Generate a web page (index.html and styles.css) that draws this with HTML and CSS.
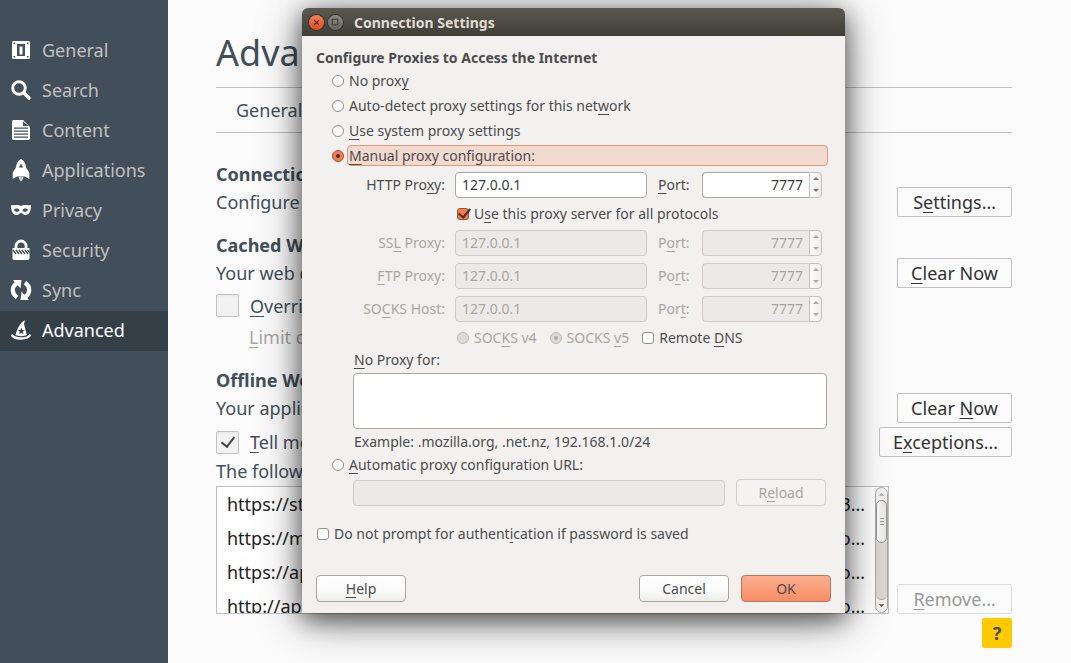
FILE: index.html
```html
<!DOCTYPE html>
<html lang="en">
<head>
<meta charset="utf-8">
<title>Connection Settings</title>
<link rel="stylesheet" href="styles.css">
</head>
<body>
<div class="page">
  <nav class="sidebar">
    <a class="category" href="#general"><svg class="icon" viewBox="0 0 20 20"><rect x="1" y="1" width="18" height="18" rx="1.500" fill="#fff"/><path fill="#424f5a" d="M6 4h8v12h-2.500V6.500h-3V16H6z"/><path fill="#424f5a" d="M8 14.500h4V16H8zM2.500 2.500H4V4H2.500zM16 2.500h1.500V4H16zM2.500 16H4v1.500H2.500zM16 16h1.500v1.500H16z"/></svg>General</a>
    <a class="category" href="#search"><svg class="icon" viewBox="0 0 20 20"><circle cx="8" cy="8" r="6.300" fill="none" stroke="#fff" stroke-width="3"/><path stroke="#fff" stroke-width="3.600" stroke-linecap="round" d="M13 13l5 5"/></svg>Search</a>
    <a class="category" href="#content"><svg class="icon" viewBox="0 0 20 20"><path fill="#fff" fill-rule="evenodd" d="M2 0h10l7 7v12l-1 1H2l-1-1V1zM12 1.500V6h5.500zM3 7.500v1.200h14V7.500zM3 10.500v1.200h14v-1.200zM3 13.500v1.200h14v-1.200zM3 16.500v1.200h14v-1.200z"/></svg>Content</a>
    <a class="category" href="#applications"><svg class="icon" viewBox="0 0 20 20"><path fill="#fff" fill-rule="evenodd" d="M10-1c3 1.500 4.800 4.500 5 8.500l3.300 5V19l-4.300-2.500H6L1.700 19v-6.500l3.300-5C5.200 3.500 7 .5 10-1zm0 4.500L8 7.500h4z"/><path fill="#ccc" d="M7.500 17h5L11.500 20 10 21.500 8.500 20z"/></svg>Applications</a>
    <a class="category" href="#privacy"><svg class="icon" viewBox="0 0 20 20"><path fill="#fff" fill-rule="evenodd" d="M0 5c3 1 6-1 10 1 4-2 7 0 10-1 0 6-1.500 10-5.500 10-2.500 0-3-2-4.500-2s-2 2-4.500 2C1.500 15 0 11 0 5zm3 5c1.500 2.500 4.500 2 5.500.500C7.500 8 4.500 8 3 10zm8.500.500c1 1.500 4 2 5.500-.500-1.500-2-4.500-2-5.500.500z"/></svg>Privacy</a>
    <a class="category" href="#security"><svg class="icon" viewBox="0 0 20 20"><path fill="none" stroke="#fff" stroke-width="2.800" d="M5 9V6a5 5 0 0 1 10 0v3"/><path fill="#fff" d="M1.500 8h17v11l-1 1h-15l-1-1z"/><path stroke="#424f5a" stroke-width="1.400" d="M2 10l3 4M5 10l3 4M8 10l3 4M11 10l3 4M14 10l3 4M16.500 10l2 2.700"/></svg>Security</a>
    <a class="category" href="#sync"><svg class="icon" viewBox="0 0 20 20"><path fill="none" stroke="#fff" stroke-width="4.200" d="M6 17.500C.5 13.500.5 7 5.500 3.500M14 2.500c5.500 4 5.500 10.500.5 14"/><path fill="#fff" d="M2 0h8.500L9.500 8.500zM18 20H9.500l1-8.500z"/></svg>Sync</a>
    <a class="category selected" href="#advanced"><svg class="icon" viewBox="0 0 20 20"><path fill="#fff" d="M14 0l-1 4 2.800 11c-3 1.500-8 1.500-11.300 0C6 10 8 3.500 14 0z"/><path fill="none" stroke="#fff" stroke-width="2.400" stroke-linecap="round" d="M1.300 15.500c2.500 4 15 4 17.400 0"/><path fill="#343f48" d="M10.300 7.500l1 2.500h2.500l-2 1.600.800 2.600-2.300-1.500L8 14.200l.800-2.600-2-1.600h2.500z"/></svg>Advanced</a>
  </nav>

  <main class="content">
    <h1 class="title">Advanced</h1>
    <div class="tabs"><a class="tab" href="#general-tab">General</a></div>

    <h2 class="group">Connection</h2>
    <div class="row"><span>Configure</span><button class="button">S<u>e</u>ttings…</button></div>

    <h2 class="group spaced">Cached Web</h2>
    <div class="row"><span>Your web cache</span><button class="button"><u>C</u>lear Now</button></div>
    <label class="check-row"><input class="box" type="checkbox"><span><u>O</u>verride</span></label>
    <div class="limit"><span><u>L</u>imit cache</span></div>

    <h2 class="group spaced">Offline Web</h2>
    <div class="row"><span>Your application</span><button class="button">Clear <u>N</u>ow</button></div>
    <div class="row tell"><label class="check"><input class="box" type="checkbox" checked><span><u>T</u>ell me</span></label><button class="button wide">E<u>x</u>ceptions…</button></div>
    <div class="caption">The following</div>
    <div class="sites">
      <div class="list">
        <ul class="items">
          <li><span>https://st</span><span>3…</span></li>
          <li><span>https://m</span><span>o…</span></li>
          <li><span>https://ap</span><span>o…</span></li>
          <li><span>http://app</span><span>o…</span></li>
        </ul>
        <div class="scrollbar">
          <svg class="arrow" viewBox="0 0 12 12"><path fill="#aaa" d="M3 8l3-3 3 3z"/></svg>
          <div class="track"><div class="thumb"></div></div>
          <svg class="arrow" viewBox="0 0 12 12"><path fill="#555" d="M3 4l3 3 3-3z"/></svg>
        </div>
      </div>
      <button class="button" disabled><u>R</u>emove…</button>
    </div>
    <div class="help-row"><button class="help">?</button></div>
  </main>
</div>

<section class="dialog" role="dialog" aria-labelledby="dialog-title">
  <header class="titlebar">
    <button class="window-button close" aria-label="Close"><svg viewBox="0 0 16 16"><path stroke="#5a2410" stroke-width="1.300" d="M5.500 5.500l5 5M10.500 5.500l-5 5"/></svg></button>
    <button class="window-button" aria-label="Maximize"><svg viewBox="0 0 16 16"><path fill="none" stroke="#34332e" d="M4.500 4.500h6v6h-6z"/></svg></button>
    <span id="dialog-title">Connection Settings</span>
  </header>
  <form class="body">
    <h3 class="heading">Configure Proxies to Access the Internet</h3>
    <label class="choice"><input class="radio" type="radio" name="mode"><span>No prox<u>y</u></span></label>
    <label class="choice"><input class="radio" type="radio" name="mode"><span>Auto-detect proxy settings for this net<u>w</u>ork</span></label>
    <label class="choice"><input class="radio" type="radio" name="mode"><span><u>U</u>se system proxy settings</span></label>
    <label class="choice"><input class="radio" type="radio" name="mode" checked><span class="focused"><u>M</u>anual proxy configuration:</span></label>

    <div class="proxies">
      <label class="name" for="http">HTTP Pro<u>x</u>y:</label>
      <input class="field" id="http" value="127.0.0.1">
      <label for="http-port"><u>P</u>ort:</label>
      <div class="spin"><input class="field" id="http-port" value="7777"><div class="steps"><button type="button" class="step up" aria-label="Increase"></button><button type="button" class="step down" aria-label="Decrease"></button></div></div>

      <label class="share"><input class="tick" type="checkbox" checked><span>U<u>s</u>e this proxy server for all protocols</span></label>

      <label class="name off" for="ssl">SS<u>L</u> Proxy:</label>
      <input class="field" id="ssl" value="127.0.0.1" disabled>
      <label class="off" for="ssl-port">P<u>o</u>rt:</label>
      <div class="spin off"><input class="field" id="ssl-port" value="7777" disabled><div class="steps"><button type="button" class="step up" aria-label="Increase" disabled></button><button type="button" class="step down" aria-label="Decrease" disabled></button></div></div>

      <label class="name off" for="ftp"><u>F</u>TP Proxy:</label>
      <input class="field" id="ftp" value="127.0.0.1" disabled>
      <label class="off" for="ftp-port">Po<u>r</u>t:</label>
      <div class="spin off"><input class="field" id="ftp-port" value="7777" disabled><div class="steps"><button type="button" class="step up" aria-label="Increase" disabled></button><button type="button" class="step down" aria-label="Decrease" disabled></button></div></div>

      <label class="name off" for="socks">SO<u>C</u>KS Host:</label>
      <input class="field" id="socks" value="127.0.0.1" disabled>
      <label class="off" for="socks-port">Por<u>t</u>:</label>
      <div class="spin off"><input class="field" id="socks-port" value="7777" disabled><div class="steps"><button type="button" class="step up" aria-label="Increase" disabled></button><button type="button" class="step down" aria-label="Decrease" disabled></button></div></div>

      <div class="versions">
        <label class="option off"><input class="radio" type="radio" name="socks" disabled><span>SOC<u>K</u>S v4</span></label>
        <label class="option off"><input class="radio" type="radio" name="socks" checked disabled><span>SOCKS <u>v</u>5</span></label>
        <label class="option"><input class="tick" type="checkbox"><span>Remote <u>D</u>NS</span></label>
      </div>
    </div>

    <div class="exceptions">
      <label class="line" for="bypass"><span><u>N</u>o Proxy for:</span></label>
      <textarea class="field area" id="bypass"></textarea>
      <div class="example">Example: .mozilla.org, .net.nz, 192.168.1.0/24</div>
    </div>
    <label class="choice auto"><input class="radio" type="radio" name="mode"><span><u>A</u>utomatic proxy configuration URL:</span></label>
    <div class="url"><input class="field" aria-label="Automatic proxy configuration URL" disabled><button type="button" class="push" disabled>R<u>e</u>load</button></div>
    <label class="prompt"><input class="tick" type="checkbox"><span>Do not prompt for authent<u>i</u>cation if password is saved</span></label>
    <footer class="actions">
      <button type="button" class="push"><u>H</u>elp</button>
      <button type="button" class="push cancel">Cancel</button>
      <button type="button" class="push primary">OK</button>
    </footer>
  </form>
</section>
</body>
</html>
```
FILE: styles.css
```css
* { box-sizing: border-box; }
body {
  margin: 0;
  font: 18px/26px "Noto Sans", "Open Sans", sans-serif;
  color: #424f5a;
  background: #fbfbfb;
}
button, input, textarea { font: inherit; color: inherit; margin: 0; }
u { text-decoration-thickness: 1px; text-underline-offset: 3px; }
a { color: inherit; text-decoration: none; }
label, .row, .category, .push, .button { white-space: nowrap; }

.page { display: flex; min-height: 100vh; overflow: hidden; }
.sidebar { flex: 0 0 168px; padding-top: 31px; background: #424f5a; }
.category {
  display: flex;
  align-items: center;
  gap: 11px;
  height: 40px;
  padding: 0 0 2px 11px;
  color: #c1c1c1;
}
.selected { background: #343f48; color: #fff; }
.icon { width: 20px; height: 20px; overflow: visible; }

.content { flex: 1; padding: 0 59px 15px 48px; }
.title {
  margin: 0;
  height: 88px;
  padding-top: 30px;
  border-bottom: 1px solid #c1c1c1;
  font-size: 36px;
  line-height: 46px;
  font-weight: 400;
}
.tabs {
  display: flex;
  align-items: center;
  height: 45px;
  margin-bottom: 28px;
  padding-left: 20px;
  border-bottom: 1px solid #c1c1c1;
}
.group { margin: 0; font-size: 18px; line-height: 26px; font-weight: 700; }
.spaced { margin-top: 15px; }
.row { display: flex; align-items: center; justify-content: space-between; height: 30px; }
.button {
  width: 115px;
  height: 30px;
  padding: 0;
  border: 1px solid #c1c1c1;
  border-radius: 2px;
  background: #fbfbfb;
  color: #333;
  line-height: 28px;
}
.button:disabled { border-color: #dedede; color: #999; }
.wide { width: 133px; }
.check-row, .check { display: flex; align-items: center; gap: 11px; }
.check-row { height: 35px; }
.tell { margin-top: 4px; }
.box {
  appearance: none;
  display: grid;
  place-items: center;
  width: 23px;
  height: 23px;
  border: 1px solid #c1c1c1;
  border-radius: 2px;
  background: linear-gradient(#eaeaea, #f2f2f2 3px);
}
.box:checked::before {
  content: "";
  width: 6px;
  height: 11px;
  margin-bottom: 3px;
  border: solid #444;
  border-width: 0 2px 2px 0;
  transform: rotate(38deg);
}
.limit { height: 29px; padding-left: 33px; line-height: 28px; color: #aaa6a1; }
.caption { height: 29px; line-height: 28px; }
.sites { display: flex; align-items: flex-end; gap: 8px; }
.list {
  flex: 1;
  display: flex;
  height: 128px;
  border: 1px solid #c1c1c1;
  background: #fff;
  overflow: hidden;
}
.items { flex: 1; margin: 0; padding: 0 10px; list-style: none; color: #222; }
.items li { display: flex; justify-content: space-between; height: 34px; line-height: 35px; }
.scrollbar {
  display: flex;
  flex-direction: column;
  width: 13px;
  border: 1px solid #aaa7a3;
  border-radius: 7px;
  background: #f2f1f0;
}
.arrow { height: 12px; }
.track { flex: 1; border-radius: 6px; background: #d9d7d5; border-bottom: 1px solid #aaa7a3; }
.thumb {
  display: grid;
  height: 43px;
  border: 1px solid #999;
  border-radius: 6px;
  background: linear-gradient(90deg, #fafafa, #e6e5e4);
}
.thumb::before {
  content: "";
  width: 4px;
  height: 8px;
  margin: auto;
  background: repeating-linear-gradient(#999 0 1px, transparent 1px 3px);
}
.help-row { display: flex; justify-content: flex-end; margin-top: 4px; }
.help {
  width: 30px;
  height: 30px;
  padding: 0;
  border: 0;
  border-radius: 2px;
  background: #ffcb00;
  color: #4c4c4c;
  font-weight: 700;
}

.dialog {
  position: absolute;
  top: 8px;
  left: 302px;
  width: 543px;
  border-radius: 6px 6px 0 0;
  background: #f2f1f0;
  color: #4c4c4c;
  font-size: 14px;
  line-height: 20px;
  box-shadow: 0 8px 46px rgba(0, 0, 0, .4), 0 6px 24px rgba(0, 0, 0, .55);
}
.titlebar {
  display: flex;
  align-items: center;
  gap: 4px;
  height: 28px;
  padding-left: 7px;
  border-radius: 6px 6px 0 0;
  background: linear-gradient(#5b5850, #403e38);
  color: #dfdbd2;
  font-weight: 700;
  line-height: 28px;
}
.titlebar span { margin-left: 7px; padding-top: 1px; }
.window-button {
  display: flex;
  width: 15px;
  height: 15px;
  padding: 0;
  border: 0;
  border-radius: 50%;
  background: linear-gradient(#8b8981, #66645d);
  box-shadow: 0 0 0 1px #34332e;
}
.close { background: linear-gradient(#f4805a, #df4d1d); }
.body { padding: 12px 14px 11px; }
.heading { margin: 0; font-size: 14px; line-height: 20px; }
.choice { display: flex; align-items: center; gap: 5px; height: 25px; padding-left: 16px; }
.focused {
  flex: 1;
  height: 21px;
  margin: 0 3px 0 -2px;
  padding-left: 1px;
  border: 1px solid #f0956f;
  border-radius: 4px;
  background: #f1dad0;
  line-height: 19px;
}
.radio, .tick {
  appearance: none;
  display: grid;
  place-items: center;
  flex: none;
  width: 12px;
  height: 12px;
  border: 1px solid #94918b;
  background: #fff;
}
.radio { border-radius: 50%; }
.tick { border-radius: 3px; }
.radio:checked { border-color: #b0532f; background: #ee7d52; }
.radio:checked::before { content: ""; width: 4px; height: 4px; border-radius: 50%; background: #4e2c20; }
.radio:disabled { border-color: #bdbab6; background: #dddbd9; }
.radio:disabled:checked::before { background: #aaa; }
.tick:checked { border-color: #a14e2e; background: #ee7d52; }
.tick:checked::before {
  content: "";
  width: 5px;
  height: 10px;
  margin: -4px 0 0 3px;
  border: solid #4e2c20;
  border-width: 0 2px 2px 0;
  transform: rotate(40deg);
}
.off { color: #aaa6a1; }

.proxies {
  display: grid;
  grid-template-columns: 129px 192px 34px 120px;
  grid-template-rows: 33px 25px 33px 33px 33px 25px;
  column-gap: 10px;
  align-items: center;
}
.proxies > label[for$="port"], .spin { margin: 0 -1px 0 1px; }
.name { text-align: right; }
.field {
  width: 100%;
  min-width: 0;
  height: 26px;
  padding: 0 6px;
  border: 1px solid #aaa7a3;
  border-radius: 4px;
  background: #fff;
  color: #3c3c3c;
}
.field:disabled { border-color: #cfccc9; background: #ebeae9; color: #aaa6a1; }
.spin { display: flex; }
.spin .field { flex: 1; border-right: 0; border-radius: 4px 0 0 4px; text-align: right; }
.steps {
  display: flex;
  flex-direction: column;
  width: 13px;
  border: 1px solid #c5c2bf;
  border-radius: 0 4px 4px 0;
  background: linear-gradient(90deg, #fff, #eeedec);
}
.step { display: grid; place-items: center; flex: 1; padding: 0; border: 0; background: none; }
.step::before { content: ""; border: 3px solid transparent; }
.up::before { border-top: 0; border-bottom-color: #777; }
.down::before { border-bottom: 0; border-top-color: #777; }
.step:disabled { opacity: .6; }
.share { grid-column: 2 / -1; display: flex; align-items: center; gap: 5px; padding-left: 2px; }
.versions { grid-column: 2 / -1; display: flex; gap: 13px; padding-left: 2px; }
.option { display: flex; align-items: center; gap: 5px; }

.exceptions { padding: 0 4px 0 37px; }
.line { display: block; }
.line, .example { padding-left: 1px; }
.area { display: block; height: 56px; margin-top: 3px; resize: none; }
.example { line-height: 25px; }
.auto { height: 22px; }
.url { display: flex; align-items: flex-end; gap: 11px; margin-top: 3px; padding: 0 5px 0 37px; }
.push {
  flex: none;
  width: 90px;
  height: 27px;
  padding: 0;
  border: 1px solid #aaa7a3;
  border-radius: 4px;
  background: linear-gradient(#fff, #fafafa 60%, #ececeb);
}
.push:disabled { border-color: #d2d0cd; background: #f4f3f2; color: #aaa6a1; }
.prompt { display: flex; align-items: center; gap: 5px; height: 23px; margin: 16px 0 30px; padding-left: 1px; }
.actions { display: flex; gap: 12px; }
.cancel { margin-left: auto; }
.primary { border-color: #b5785e; background: linear-gradient(#fcae8f, #f68d65); }
```
